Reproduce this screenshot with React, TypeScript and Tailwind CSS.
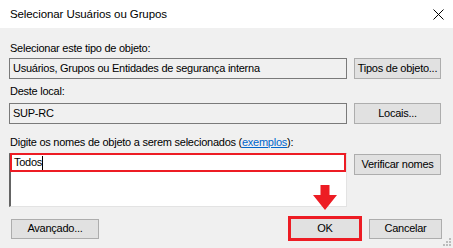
import React from 'react';

function WinButton({ label, className = '' }: { label: string; className?: string }) {
  return (
    <div
      className={`flex items-center justify-center whitespace-nowrap bg-[#e1e1e1] border border-[#adadad] text-black ${className}`}
    >
      {label}
    </div>
  );
}

function ReadOnlyBox({ value }: { value: string }) {
  return (
    <div className="w-[338px] h-[21px] flex items-center px-[3px] bg-[#f0f0f0] border border-[#7a7a7a] whitespace-nowrap">
      {value}
    </div>
  );
}

function ResizeGrip() {
  const dots = [
    [6, 0],
    [3, 3],
    [6, 3],
    [0, 6],
    [3, 6],
    [6, 6],
  ];
  return (
    <svg width="9" height="9" viewBox="0 0 9 9" className="absolute right-[1px] bottom-[1px]">
      {dots.map(([x, y], i) => (
        <rect key={i} x={x} y={y} width="2" height="2" fill="#bcbcbc" />
      ))}
    </svg>
  );
}

export default function App() {
  return (
    <div
      className="w-[453px] h-[248px] flex flex-col bg-[#f0f0f0] text-[11px] tracking-[-0.25px] leading-[15px] text-black overflow-hidden relative"
      style={{ fontFamily: '"Liberation Sans", Arial, sans-serif' }}
    >
      {/* Title bar */}
      <div className="h-[28px] bg-white flex items-center justify-between pl-[10px] pr-[9px] shrink-0">
        <span className="text-[11.5px] tracking-[-0.1px]">Selecionar Usuários ou Grupos</span>
        <svg width="11" height="11" viewBox="0 0 11 11">
          <path d="M0.5 0.5 L10.5 10.5 M10.5 0.5 L0.5 10.5" stroke="#000" strokeWidth="1" />
        </svg>
      </div>

      {/* Body */}
      <div className="flex flex-col pl-[9px] pr-[12px]">
        <div className="mt-[13px] h-[15px] pl-[1px]">Selecionar este tipo de objeto:</div>
        <div className="mt-[2px] flex items-center gap-[7px]">
          <ReadOnlyBox value="Usuários, Grupos ou Entidades de segurança interna" />
          <WinButton label="Tipos de objeto..." className="w-[87px] h-[21px]" />
        </div>

        <div className="mt-[5px] h-[15px] pl-[1px]">Deste local:</div>
        <div className="mt-[4px] flex items-center gap-[7px]">
          <ReadOnlyBox value="SUP-RC" />
          <WinButton label="Locais..." className="w-[87px] h-[21px]" />
        </div>

        <div className="mt-[11px] h-[15px] pl-[1px] whitespace-nowrap">
          Digite os nomes de objeto a serem selecionados (
          <span className="text-[#0066cc] underline">exemplos</span>):
        </div>
        <div className="mt-[3px] flex items-start gap-[7px]">
          <div className="w-[338px] h-[54px] bg-white border-l-2 border-t border-l-[#646464] border-t-[#a0a0a0] border-r border-b border-r-[#e3e3e3] border-b-[#e3e3e3]">
            <div className="-ml-[1px] -mt-[1px] h-[19px] border-2 border-[#ed1c24] flex items-center pl-[2px]">
              <span>Todos</span>
              <span className="w-[1px] h-[14px] bg-black" />
            </div>
          </div>
          <WinButton label="Verificar nomes" className="mt-[1px] w-[87px] h-[21px]" />
        </div>

        <div className="mt-[9px] flex items-center justify-between">
          <WinButton label="Avançado..." className="ml-[2px] w-[88px] h-[20px]" />
          <div className="flex items-center gap-[7px] relative">
            {/* Red arrow pointing at OK */}
            <svg width="24" height="25" viewBox="0 0 24 25" className="absolute left-[25px] -top-[31px]">
              <path d="M7.5 0 H16.5 V10 H24 L12 25 L0 10 H7.5 Z" fill="#ed1c24" />
            </svg>
            <div className="w-[74px] h-[25px] border-[3px] border-[#ed1c24] bg-[#e1e1e1] flex items-center justify-center">
              OK
            </div>
            <WinButton label="Cancelar" className="w-[73px] h-[20px] -mr-[1px]" />
          </div>
        </div>
      </div>
      <ResizeGrip />
    </div>
  );
}
